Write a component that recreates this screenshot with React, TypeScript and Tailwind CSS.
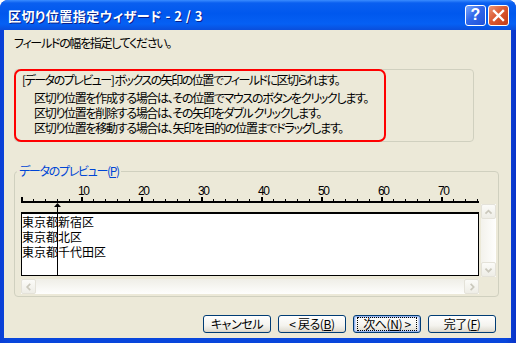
import type { ReactNode } from 'react';

type Dir = 'up' | 'down' | 'left' | 'right';

const chevrons: Record<Dir, string> = {
  up: 'M4 9 L7.5 5.5 L11 9',
  down: 'M4 5.5 L7.5 9 L11 5.5',
  left: 'M9.5 3.5 L6 7 L9.5 10.5',
  right: 'M6.5 3.5 L10 7 L6.5 10.5'
};

const ScrollButton = ({ dir }: { dir: Dir }) => (
  <div className="flex h-[15px] w-[15px] shrink-0 items-center justify-center rounded-[2px] border border-[#E4E2D9] bg-[linear-gradient(180deg,#FBFBF8,#EEEDE6)]">
    <svg width="15" height="14" viewBox="0 0 15 14">
      <path d={chevrons[dir]} fill="none" stroke="#CAC8BC" strokeWidth="2" />
    </svg>
  </div>
);

const Ul = ({ children }: { children: ReactNode }) => <span className="underline underline-offset-1">{children}</span>;

const DialogButton = ({ children, isDefault = false }: { children: ReactNode; isDefault?: boolean }) => (
  <button
    className={
      isDefault
        ? 'flex h-[18px] w-[68px] items-center justify-center rounded-[3px] border border-[#003C74] bg-[linear-gradient(180deg,#FFFFFF_0%,#F4F3EE_60%,#E3E0D6_90%,#D6D0C5_100%)] tracking-[-0.4px] shadow-[inset_0_0_0_1px_#98B5EE,inset_0_0_0_2px_#CCDDFB]'
        : 'flex h-[18px] w-[68px] items-center justify-center rounded-[3px] border border-[#003C74] bg-[linear-gradient(180deg,#FFFFFF_0%,#F4F3EE_60%,#E3E0D6_90%,#D6D0C5_100%)] tracking-[-0.4px]'
    }
  >
    {isDefault ? (
      <span className="border border-dotted border-black px-[5px] leading-[12px]">{children}</span>
    ) : (
      <span className="leading-[14px]">{children}</span>
    )}
  </button>
);

const Ruler = () => {
  const ticks = Array.from({ length: 39 }, (_, i) => i * 2);
  return (
    <svg width="458" height="27" viewBox="0 0 458 27" className="block">
      {[10, 20, 30, 40, 50, 60, 70].map((p) => (
        <text key={p} x={6 * p - 3} y="10" fontSize="12" fill="#000" fontFamily="'Liberation Sans', sans-serif">
          {p}
        </text>
      ))}
      {ticks.map((p) =>
        p % 10 === 0 ? (
          <rect key={p} x={6 * p} y="12" width="2" height="5" fill="#000" />
        ) : (
          <rect key={p} x={6 * p} y="14" width="1" height="3" fill="#000" />
        )
      )}
      <rect x="0" y="16" width="458" height="2" fill="#000" />
      <polygon points="36.5,18 33,22 40,22" fill="#000" />
      <rect x="36" y="21" width="1" height="6" fill="#000" />
    </svg>
  );
};

export default function App() {
  return (
    <div className="h-[343px] w-[516px] bg-white text-[12px] text-black [font-family:'Noto_Sans_CJK_JP','Noto_Sans',sans-serif]">
      <div className="flex h-full flex-col overflow-hidden rounded-t-[8px] bg-[linear-gradient(90deg,#0A3FD6,#0846DC_2%,#0846DC_98%,#0A33C8)]">
        {/* title bar */}
        <div className="flex h-[30px] shrink-0 items-center bg-[linear-gradient(180deg,#3A8CFF_0%,#0A5FF0_10%,#0058EE_45%,#0560F4_80%,#0A4EDB_100%)] pl-[8px] pr-[7px]">
          <span className="text-[13px] font-bold leading-none tracking-[0.5px] text-white [font-feature-settings:'palt'] [text-shadow:1px_1px_0_#0A1F8A]">
            区切り位置指定ウィザード - 2 / 3
          </span>
          <div className="ml-auto flex gap-[2px]">
            <div className="flex h-[21px] w-[21px] items-center justify-center rounded-[3px] border border-white bg-[linear-gradient(135deg,#7AA6FB,#3067EA_45%,#2152D9)] text-[16px] font-bold leading-none text-white [font-family:'Liberation_Sans',sans-serif]">
              ?
            </div>
            <div className="flex h-[21px] w-[21px] items-center justify-center rounded-[3px] border border-white bg-[linear-gradient(135deg,#EE9676,#DB5A32_45%,#C33B17)]">
              <svg width="13" height="13" viewBox="0 0 13 13">
                <path d="M2 2 L11 11 M11 2 L2 11" stroke="#fff" strokeWidth="2.4" strokeLinecap="square" />
              </svg>
            </div>
          </div>
        </div>

        {/* client area */}
        <div className="ml-[4px] flex h-[308px] w-[507px] flex-col whitespace-nowrap bg-[#ECE9D8] pl-[10px] tracking-[-1.3px] [font-feature-settings:'palt']">
          <p className="pt-[6px] leading-[14px]">フィールドの幅を指定してください。</p>

          <div className="mt-[19px] flex w-[460px] rounded-[4px] border border-[#D0D0BF]">
            <div className="-my-px -ml-px h-[73px] w-[372px] rounded-[7px] border-2 border-[#FF0000] pl-[6px] pt-[1px] leading-[15px]">
              <p className="mb-[3px] tracking-[-1.5px]">[データのプレビュー] ボックスの矢印の位置でフィールドに区切られます。</p>
              <p className="pl-[12px]">区切り位置を作成する場合は、その位置でマウスのボタンをクリックします。</p>
              <p className="pl-[12px]">区切り位置を削除する場合は、その矢印をダブル クリックします。</p>
              <p className="pl-[12px]">区切り位置を移動する場合は、矢印を目的の位置までドラッグします。</p>
            </div>
          </div>

          <fieldset className="mt-[22px] w-[485px] rounded-[4px] border border-[#D0D0BF] p-0">
            <legend className="ml-[2px] px-[2px] leading-[14px] text-[#0046D5]">
              データのプレビュー(<Ul>P</Ul>)
            </legend>
            <div className="flex gap-[2px] pb-[2px] pl-[6px] pt-[7px]">
              <div className="flex w-[458px] flex-col">
                <Ruler />
                <div className="relative h-[64px] border border-t-2 border-black bg-white leading-[15px] tracking-normal [font-feature-settings:normal]">
                  <div className="absolute bottom-0 left-[35px] top-0 w-px bg-black" />
                  <p>東京都新宿区</p>
                  <p>東京都北区</p>
                  <p>東京都千代田区</p>
                </div>
                <div className="mt-[3px] flex h-[15px] justify-between bg-[linear-gradient(180deg,#EFEEE7,#FEFEFD)]">
                  <ScrollButton dir="left" />
                  <ScrollButton dir="right" />
                </div>
              </div>
              <div className="mt-[19px] flex h-[73px] w-[15px] flex-col justify-between bg-[linear-gradient(90deg,#F3F2EC,#FEFEFD)]">
                <ScrollButton dir="up" />
                <ScrollButton dir="down" />
              </div>
            </div>
          </fieldset>

          <div className="mt-[18px] flex justify-end gap-[7px] pr-[15px]">
            <DialogButton>キャンセル</DialogButton>
            <DialogButton>
              &lt; 戻る(<Ul>B</Ul>)
            </DialogButton>
            <DialogButton isDefault>
              次へ(<Ul>N</Ul>) &gt;
            </DialogButton>
            <DialogButton>
              完了(<Ul>F</Ul>)
            </DialogButton>
          </div>
        </div>
      </div>
    </div>
  );
}
